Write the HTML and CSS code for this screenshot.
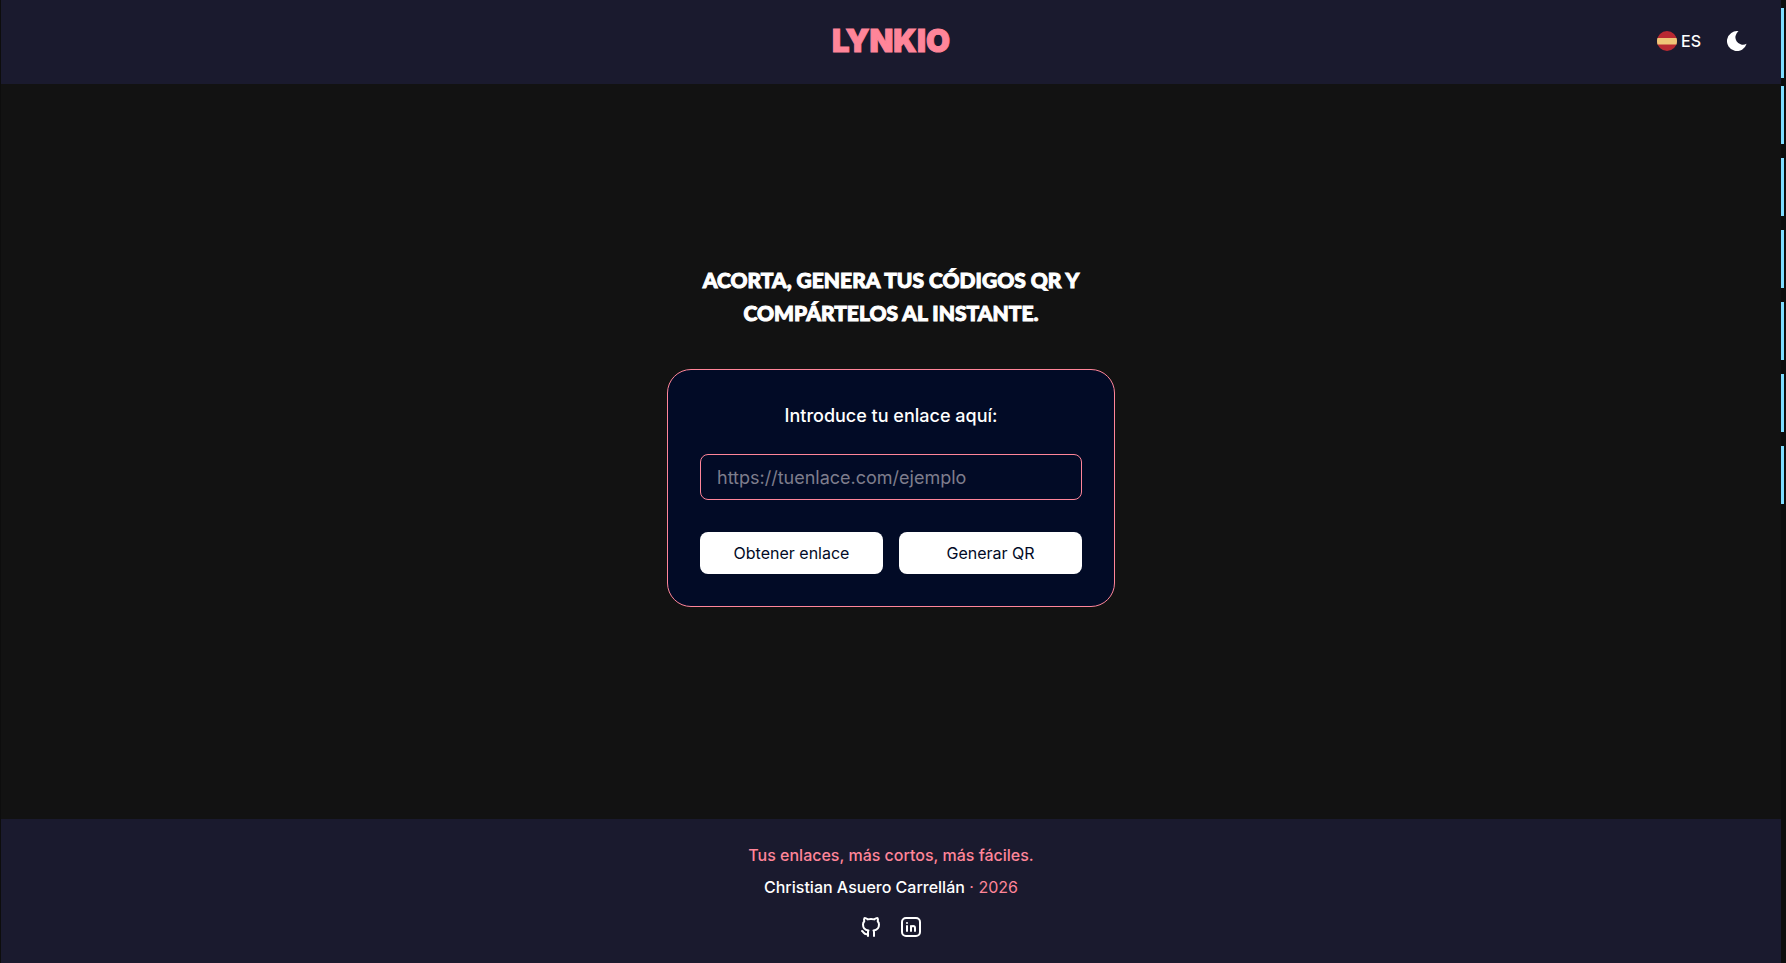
FILE: index.html
```html
<!DOCTYPE html>
<html lang="es">
<head>
<meta charset="utf-8">
<title>Lynkio</title>
<link rel="stylesheet" href="styles.css">
</head>
<body>
<div class="page">
  <header class="header">
    <a class="logo" href="#">Lynkio</a>
    <div class="tools">
      <button class="tool" type="button">
        <svg class="flag" viewBox="0 0 20 20" aria-hidden="true"><circle cx="10" cy="10" r="10" fill="#b92932"/><path d="M.5 7h19q.5 1.500.5 3t-.5 3.500H.5Q0 12 0 10t.5-3z" fill="#efc577"/></svg>
        <span>ES</span>
      </button>
      <button class="tool" type="button" aria-label="Cambiar tema">
        <svg class="moon" viewBox="0 0 20 20" aria-hidden="true"><path d="M11.500.2A10 10 0 1 0 19.600 12.800 7.500 7.500 0 0 1 11.500.2z" fill="#fff"/></svg>
      </button>
    </div>
  </header>
  <main class="main">
    <h1 class="title">Acorta, genera tus códigos QR y<br>compártelos al instante.</h1>
    <form class="card">
      <label class="label" for="link">Introduce tu enlace aquí:</label>
      <input class="field" id="link" type="url" placeholder="https://tuenlace.com/ejemplo">
      <div class="actions">
        <button class="button" type="button">Obtener enlace</button>
        <button class="button" type="button">Generar QR</button>
      </div>
    </form>
  </main>
  <footer class="footer">
    <p class="line">Tus enlaces, más cortos, más fáciles.</p>
    <p class="line credit"><a class="author" href="#">Christian Asuero Carrellán</a> · 2026</p>
    <div class="social">
      <a class="icon" href="#" aria-label="GitHub"><svg viewBox="0 0 24 24"><path d="M9 19c-4.300 1.400-4.300-2.500-6-3m12 5v-3.500c0-1 .1-1.400-.5-2c2.800-.3 5.500-1.400 5.500-6a4.600 4.600 0 0 0-1.300-3.200a4.200 4.200 0 0 0-.1-3.200s-1.100-.3-3.500 1.300a12.300 12.300 0 0 0-6.200 0c-2.400-1.600-3.500-1.300-3.500-1.300a4.200 4.200 0 0 0-.1 3.200a4.600 4.600 0 0 0-1.300 3.200c0 4.600 2.700 5.700 5.500 6c-.6.6-.6 1.200-.5 2v3.500"/></svg></a>
      <a class="icon" href="#" aria-label="LinkedIn"><svg viewBox="0 0 24 24"><path d="M8 11v5M8 8v.01M12 16v-5M16 16v-3a2 2 0 1 0-4 0M3 7a4 4 0 0 1 4-4h10a4 4 0 0 1 4 4v10a4 4 0 0 1-4 4H7a4 4 0 0 1-4-4z"/></svg></a>
    </div>
  </footer>
</div>
<aside class="rail">
  <span class="mark mark-tall"></span>
  <span class="mark"></span>
  <span class="mark"></span>
  <span class="mark"></span>
  <span class="mark"></span>
  <span class="mark"></span>
  <span class="mark"></span>
</aside>
</body>
</html>
```
FILE: styles.css
```css
* {
  box-sizing: border-box;
}

body {
  margin: 0;
  padding-left: 1px;
  min-height: 100vh;
  display: flex;
  background: #0d0d0d;
  color: #fff;
  font: 500 16px/24px Inter, sans-serif;
}

.page {
  flex: 1;
  display: flex;
  flex-direction: column;
  background: #121212;
}

.header {
  display: grid;
  grid-template-columns: 1fr auto 1fr;
  align-items: center;
  padding: 19px 32px 21px;
  background: #1a1a2e;
}

.logo {
  grid-column: 2;
  color: #ff8599;
  font: 900 31px/44px Inter, sans-serif;
  text-transform: uppercase;
  text-decoration: none;
  -webkit-text-stroke: 1px #ff8599;
}

.tools {
  justify-self: end;
  display: flex;
  gap: 22px;
}

.tool {
  display: flex;
  align-items: center;
  gap: 4px;
  padding: 0 2px;
  border: 0;
  background: none;
  color: inherit;
  font: inherit;
}

.flag,
.moon {
  width: 20px;
  height: 20px;
}

.main {
  flex: 1;
  display: flex;
  flex-direction: column;
  align-items: center;
  justify-content: center;
  gap: 40px;
  padding: 0 16px 33px;
}

.title {
  margin: 0;
  text-align: center;
  text-transform: uppercase;
  font: 900 21px/33px Lato, sans-serif;
  -webkit-text-stroke: 1px #fff;
}

.card {
  width: 100%;
  max-width: 448px;
  display: flex;
  flex-direction: column;
  padding: 32px;
  border: 1px solid #ff8599;
  border-radius: 24px;
  background: #020b26;
}

.label {
  margin-bottom: 24px;
  text-align: center;
  font-size: 18px;
  line-height: 28px;
}

.field {
  width: 100%;
  height: 46px;
  margin-bottom: 32px;
  padding: 0 16px;
  border: 1px solid #ff8599;
  border-radius: 8px;
  background: transparent;
  color: #fff;
  font: 400 18px/28px Inter, sans-serif;
}

.field::placeholder {
  color: #7e7d8c;
}

.actions {
  display: grid;
  grid-template-columns: 1fr 1fr;
  gap: 16px;
}

.button {
  height: 42px;
  border: 0;
  border-radius: 8px;
  background: #fff;
  color: #020b26;
  font: 400 16px/24px Inter, sans-serif;
}

.footer {
  display: flex;
  flex-direction: column;
  align-items: center;
  gap: 8px;
  padding: 24px 16px;
  background: #1a1a2e;
}

.line {
  margin: 0;
  color: #ff8599;
}

.credit {
  font-weight: 400;
}

.author {
  color: #fff;
  font-weight: 500;
  text-decoration: none;
}

.social {
  display: flex;
  gap: 16px;
  padding-top: 8px;
}

.icon {
  width: 24px;
  height: 24px;
}

.icon svg {
  display: block;
  fill: none;
  stroke: #fff;
  stroke-width: 2;
  stroke-linecap: round;
  stroke-linejoin: round;
}

.rail {
  width: 5px;
  display: flex;
  flex-direction: column;
  gap: 14px;
  padding-top: 8px;
}

.mark {
  width: 3px;
  height: 58px;
  background: #7edcff;
}

.mark-tall {
  height: 70px;
  margin-bottom: -6px;
}
```
